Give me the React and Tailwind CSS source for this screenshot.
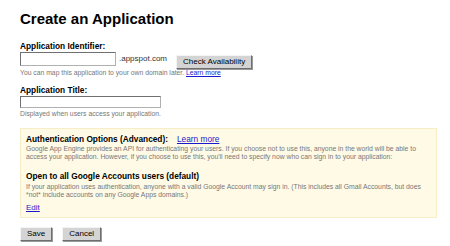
import React from "react";

const Btn = ({ children }) => (
  <button className="h-[14px] px-[6px] bg-[#d4d4d4] border border-t-[#f4f4f4] border-l-[#f4f4f4] border-b-[#6e6e6e] border-r-[#6e6e6e] shadow-[1px_1px_0_#9a9a9a] text-[8px] leading-[12px] text-black">
    {children}
  </button>
);

export default function App() {
  return (
    <div className="w-[450px] h-[246px] bg-white overflow-hidden pl-[20px] pt-[10px] font-['Liberation_Sans',Arial,sans-serif] text-black">
      <h1 className="text-[15px] leading-[18px] font-bold">Create an Application</h1>

      {/* Identifier */}
      <div className="mt-[13px] text-[8.3px] leading-[10px] font-bold">Application Identifier:</div>
      <div className="mt-[1px] flex items-center h-[14px]">
        <input className="w-[96px] h-[14px] border border-[#b0b0b0] border-t-[#707070] border-l-[#707070] bg-white" />
        <span className="ml-[3px] text-[8px] leading-[10px] text-[#333]">.appspot.com</span>
        <div className="ml-[9px]">
          <Btn>Check Availability</Btn>
        </div>
      </div>
      <div className="mt-[3px] text-[6.8px] leading-[8px] text-[#777] whitespace-nowrap">
        You can map this application to your own domain later.{" "}
        <a href="#" className="text-[#1a1acc] underline">Learn more</a>
      </div>

      {/* Title */}
      <div className="mt-[8px] text-[8.3px] leading-[10px] font-bold">Application Title:</div>
      <input className="mt-[1px] block w-[141px] h-[12px] border border-[#b0b0b0] border-t-[#707070] border-l-[#707070] bg-white" />
      <div className="mt-[2px] text-[6.8px] leading-[8px] text-[#777]">Displayed when users access your application.</div>

      {/* Auth options */}
      <div className="mt-[10px] w-[417px] bg-[#fffae6] border border-[#f7edc6] pt-[5px] pb-[4px] px-[5px]">
        <div className="flex text-[8.3px] leading-[10px]">
          <span className="font-bold">Authentication Options (Advanced):</span>
          <a href="#" className="ml-[9px] text-[#1a1acc] underline">Learn more</a>
        </div>
        <p className="mt-[1px] text-[6.8px] leading-[7.5px] text-[#777] whitespace-nowrap">
          Google App Engine provides an API for authenticating your users. If you choose not to use this, anyone in the world will be able to
          <br />
          access your application. However, if you choose to use this, you'll need to specify now who can sign in to your application:
        </p>
        <div className="mt-[11px] text-[8.3px] leading-[10px] font-bold">Open to all Google Accounts users (default)</div>
        <p className="mt-[2px] text-[6.8px] leading-[7.5px] text-[#777] whitespace-nowrap">
          If your application uses authentication, anyone with a valid Google Account may sign in. (This includes all Gmail Accounts, but does
          <br />
          *not* include accounts on any Google Apps domains.)
        </p>
        <a href="#" className="mt-[5px] block text-[8px] leading-[10px] text-[#1a1acc] underline">Edit</a>
      </div>

      {/* Actions */}
      <div className="mt-[9px] flex gap-[10px]">
        <Btn>Save</Btn>
        <Btn>Cancel</Btn>
      </div>
    </div>
  );
}
